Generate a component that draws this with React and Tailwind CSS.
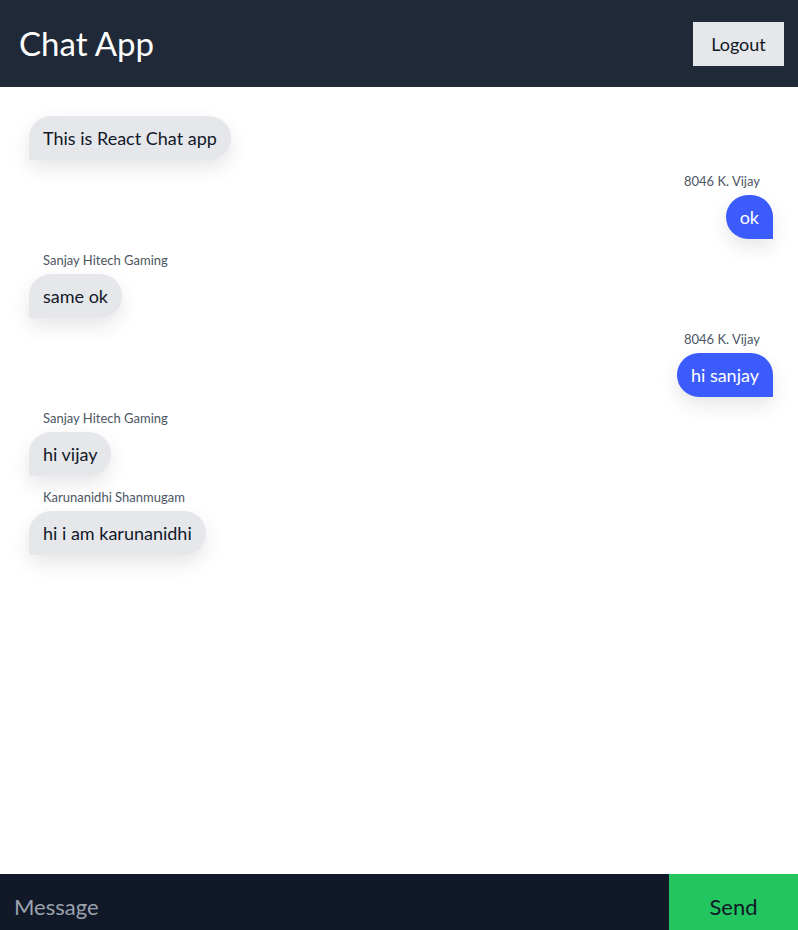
import { useState } from 'react';

const MESSAGES = [
  { id: 1, name: '', text: 'This is React Chat app', mine: false },
  { id: 2, name: '8046 K. Vijay', text: 'ok', mine: true },
  { id: 3, name: 'Sanjay Hitech Gaming', text: 'same ok', mine: false },
  { id: 4, name: '8046 K. Vijay', text: 'hi sanjay', mine: true },
  { id: 5, name: 'Sanjay Hitech Gaming', text: 'hi vijay', mine: false },
  { id: 6, name: 'Karunanidhi Shanmugam', text: 'hi i am karunanidhi', mine: false },
];

function Message({ msg }) {
  return (
    <div className={`flex flex-col ${msg.mine ? 'items-end' : 'items-start'}`}>
      {msg.name && (
        <span className={`text-[13px] leading-[18px] text-[#4b5563] mb-[5px] ${msg.mine ? 'pr-[13px]' : 'pl-[14px]'}`}>
          {msg.name}
        </span>
      )}
      <div
        className={`h-11 flex items-center px-[14px] text-lg rounded-3xl shadow-[0_8px_20px_rgba(0,0,0,0.1)] ${
          msg.mine ? 'bg-[#3b5bfd] text-white rounded-br-none' : 'bg-[#e5e7eb] text-[#111827] rounded-bl-none'
        }`}
      >
        {msg.text}
      </div>
    </div>
  );
}

export default function App() {
  const [text, setText] = useState('');

  return (
    <div className="h-[930px] flex flex-col bg-white" style={{ fontFamily: 'Lato, sans-serif' }}>
      {/* Header */}
      <header className="h-[87px] shrink-0 bg-[#1f2937] flex items-center justify-between pl-[19px] pr-[14px]">
        <h1 className="text-[33px] text-white">Chat App</h1>
        <button className="w-[91px] h-11 bg-[#e5e7eb] text-lg text-[#111827]">Logout</button>
      </header>

      {/* Messages */}
      <main className="flex-1 flex flex-col gap-3 pt-[29px] pl-[29px] pr-[25px] overflow-y-auto">
        {MESSAGES.map((m) => (
          <Message key={m.id} msg={m} />
        ))}
      </main>

      {/* Input bar */}
      <form className="h-14 shrink-0 flex" onSubmit={(e) => e.preventDefault()}>
        <input
          value={text}
          onChange={(e) => setText(e.target.value)}
          placeholder="Message"
          className="flex-1 bg-[#111827] text-white text-[22px] pt-2 px-[14px] outline-none placeholder:text-[#9ca3af]"
        />
        <button type="submit" className="w-[129px] pt-2 bg-[#22c55e] text-[22px] text-[#111827]">
          Send
        </button>
      </form>
    </div>
  );
}
